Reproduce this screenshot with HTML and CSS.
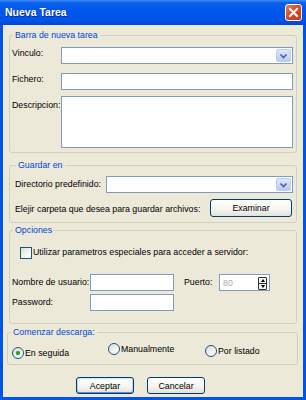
FILE: index.html
```html
<!DOCTYPE html>
<html lang="es">
<head>
    <meta charset="UTF-8">
    <title>Nueva Tarea</title>
    <link rel="stylesheet" href="styles.css">
</head>
<body>
    <div class="window">
        <div class="titlebar">
            <span class="title">Nueva Tarea</span>
            <span class="close-btn">
                <svg viewBox="0 0 15 15" width="15" height="15">
                    <path d="M4 4L11 11M11 4L4 11" stroke="#FFFFFF" stroke-width="2" stroke-linecap="square"/>
                </svg>
            </span>
        </div>

        <div class="client">
            <fieldset class="group group-task">
                <legend>Barra de nueva tarea</legend>
                <div class="row row-link">
                    <label class="lbl lbl-task">Vinculo:</label>
                    <div class="field combo">
                        <span class="combo-btn">
                            <svg viewBox="0 0 9 6" width="9" height="6"><path d="M1.5 1.5L4.5 4.5L7.5 1.5" fill="none" stroke="#4D6185" stroke-width="1.6"/></svg>
                        </span>
                    </div>
                </div>
                <div class="row row-file">
                    <label class="lbl lbl-task">Fichero:</label>
                    <div class="field"></div>
                </div>
                <div class="row row-desc">
                    <label class="lbl lbl-task lbl-desc">Descripcion:</label>
                    <div class="field area"></div>
                </div>
            </fieldset>

            <fieldset class="group group-save">
                <legend>Guardar en</legend>
                <div class="row row-dir">
                    <label class="lbl lbl-dir">Directorio predefinido:</label>
                    <div class="field combo">
                        <span class="combo-btn">
                            <svg viewBox="0 0 9 6" width="9" height="6"><path d="M1.5 1.5L4.5 4.5L7.5 1.5" fill="none" stroke="#4D6185" stroke-width="1.6"/></svg>
                        </span>
                    </div>
                </div>
                <div class="row row-browse">
                    <span class="lbl lbl-browse">Elejir carpeta que desea para guardar archivos:</span>
                    <button class="btn btn-browse">Examinar</button>
                </div>
            </fieldset>

            <fieldset class="group group-options">
                <legend>Opciones</legend>
                <div class="row row-check">
                    <span class="checkbox"></span>
                    <span class="check-text">Utilizar parametros especiales para acceder a servidor:</span>
                </div>
                <div class="row row-user">
                    <label class="lbl lbl-user">Nombre de usuario:</label>
                    <div class="field small"></div>
                    <label class="lbl lbl-port">Puerto:</label>
                    <div class="field spin">
                        <span class="spin-value">80</span>
                        <span class="spin-btns">
                            <span class="spin-up"></span>
                            <span class="spin-down"></span>
                        </span>
                    </div>
                </div>
                <div class="row row-pass">
                    <label class="lbl lbl-user">Password:</label>
                    <div class="field small"></div>
                </div>
            </fieldset>

            <fieldset class="group group-start">
                <legend>Comenzar descarga:</legend>
                <div class="radios">
                    <span class="radio-item radio-now"><span class="radio checked"></span>En seguida</span>
                    <span class="radio-item radio-manual"><span class="radio"></span>Manualmente</span>
                    <span class="radio-item radio-list"><span class="radio"></span>Por listado</span>
                </div>
            </fieldset>

            <div class="buttons">
                <button class="btn btn-default">Aceptar</button>
                <button class="btn">Cancelar</button>
            </div>
        </div>
    </div>
</body>
</html>
```

FILE: styles.css
```css
* {
    box-sizing: border-box;
}

body {
    margin: 0;
    font-family: "Liberation Sans", Tahoma, sans-serif;
    font-size: 8.8px;
    line-height: 11px;
    color: #000000;
    background: #FFFFFF;
}

.window {
    width: 306px;
    height: 400px;
    background: #0055E5;
    display: flex;
    flex-direction: column;
}

/* Title bar */
.titlebar {
    height: 25px;
    display: flex;
    align-items: center;
    justify-content: space-between;
    padding: 0 4px 0 5px;
    background: linear-gradient(to bottom, #3D8DF5 0, #0A5FEB 3px, #0058EE 40%, #0054E6 80%, #0047D6 100%);
}

.title {
    color: #FFFFFF;
    font-weight: bold;
    font-size: 10.5px;
    text-shadow: 1px 1px 0 #0A2A8C;
}

.close-btn {
    width: 17px;
    height: 17px;
    border: 1px solid #FFFFFF;
    border-radius: 3px;
    background: linear-gradient(135deg, #E8805F 0%, #DC4A26 45%, #C5381A 100%);
    display: flex;
    align-items: center;
    justify-content: center;
}

/* Client area */
.client {
    flex: 1;
    margin: 0 3px 3px;
    padding-top: 4px;
    background: #ECE9D8;
}

.group {
    margin: 0 6px;
    padding: 0 3px 0 2px;
    border: 1px solid #D0D0BF;
    border-radius: 3px;
    min-width: 0;
}

.group legend {
    padding: 0 2px;
    margin-left: 1px;
    line-height: 12px;
    color: #0046D5;
}

.row {
    display: flex;
    align-items: flex-start;
}

.lbl {
    flex-shrink: 0;
    white-space: nowrap;
}

.field {
    flex: 1;
    height: 17px;
    border: 1px solid #7F9DB9;
    background: #FFFFFF;
}

/* Combo box */
.combo {
    display: flex;
    justify-content: flex-end;
    padding: 1px;
}

.combo-btn {
    width: 15px;
    height: 13px;
    border: 1px solid #B9CCF5;
    border-radius: 2px;
    background: linear-gradient(to bottom, #DCE6FC, #B6CBF7);
    display: flex;
    align-items: center;
    justify-content: center;
}

/* Group 1 */
.group-task {
    padding-top: 6px;
    padding-bottom: 4px;
}

.lbl-task {
    width: 49px;
    padding-top: 1px;
}

.row-link {
    margin-bottom: 9px;
}

.row-file {
    margin-bottom: 6px;
}

.lbl-desc {
    padding-top: 4px;
}

.area {
    height: 52px;
}

/* Group 2 */
.group-save {
    margin-top: 6px;
    padding: 5px 3px 5px 5px;
}

.lbl-dir {
    width: 91px;
    padding-top: 3px;
}

.row-browse {
    margin-top: 6px;
    justify-content: space-between;
    align-items: center;
}

.lbl-browse {
    padding-top: 2px;
}

/* Buttons */
.btn {
    font-family: inherit;
    font-size: 8.8px;
    color: #000000;
    height: 17px;
    padding: 0;
    border: 1px solid #003C74;
    border-radius: 3px;
    background: linear-gradient(to bottom, #FFFFFF 0%, #F4F4F0 60%, #E3E1D7 100%);
}

.btn-browse {
    width: 82px;
    height: 18px;
    margin-right: 1px;
}

.btn-default {
    box-shadow: inset 0 1px 0 #CEE7FF, inset 0 -1px 0 #6982EE, inset 1px 0 0 #B8D2FA, inset -1px 0 0 #B8D2FA;
}

/* Group 3 */
.group-options {
    margin-top: 1px;
    padding-bottom: 12px;
}

.row-check {
    margin-top: 10px;
    align-items: center;
    height: 13px;
}

.checkbox {
    width: 12px;
    height: 12px;
    margin-left: 8px;
    margin-right: 1px;
    border: 1px solid #1C5180;
    background: linear-gradient(135deg, #DCDBD4 0%, #F5F5F1 60%, #FFFFFF 100%);
}

.row-user {
    margin-top: 15px;
}

.row-pass {
    margin-top: 3px;
}

.lbl-user {
    width: 78px;
    padding-top: 3px;
}

.small {
    flex: 0 0 84px;
}

.lbl-port {
    margin-left: 10px;
    width: 35px;
    padding-top: 3px;
}

.spin {
    flex: 0 0 51px;
    display: flex;
    justify-content: space-between;
    padding: 1px 2px 1px 3px;
}

.spin-value {
    color: #ACA899;
    padding-top: 2px;
}

.spin-btns {
    display: flex;
    flex-direction: column;
    width: 9px;
    margin-top: 1px;
    border: 1px solid #303030;
    border-radius: 1px;
    height: 13px;
    background: #F4F3EE;
}

.spin-up,
.spin-down {
    flex: 1;
    position: relative;
}

.spin-up {
    border-bottom: 1px solid #303030;
}

.spin-up::after,
.spin-down::after {
    content: '';
    position: absolute;
    left: 1.5px;
    border-left: 2.5px solid transparent;
    border-right: 2.5px solid transparent;
}

.spin-up::after {
    top: 1px;
    border-bottom: 3px solid #000000;
}

.spin-down::after {
    top: 1px;
    border-top: 3px solid #000000;
}

/* Group 4 */
.group-start {
    margin: 2px 5px 0 4px;
    padding-bottom: 5px;
}

.radios {
    display: flex;
    align-items: flex-start;
    height: 21px;
}

.radio-item {
    display: flex;
    align-items: center;
    gap: 1px;
}

.radio-now {
    width: 96px;
    margin-left: 2px;
    margin-top: 9px;
}

.radio-manual {
    width: 97px;
    margin-top: 5px;
}

.radio-list {
    margin-top: 7px;
}

.radio {
    width: 12px;
    height: 12px;
    border: 1px solid #1C5180;
    border-radius: 50%;
    background: linear-gradient(135deg, #DCDBD4 0%, #F5F5F1 60%, #FFFFFF 100%);
    display: flex;
    align-items: center;
    justify-content: center;
}

.radio.checked::after {
    content: '';
    width: 4px;
    height: 4px;
    border-radius: 50%;
    background: #21A121;
    box-shadow: 0 0 1px #55C455;
}

/* Dialog buttons */
.buttons {
    display: flex;
    gap: 13px;
    margin-top: 12px;
    padding-left: 73px;
}

.buttons .btn {
    width: 58px;
}
```
